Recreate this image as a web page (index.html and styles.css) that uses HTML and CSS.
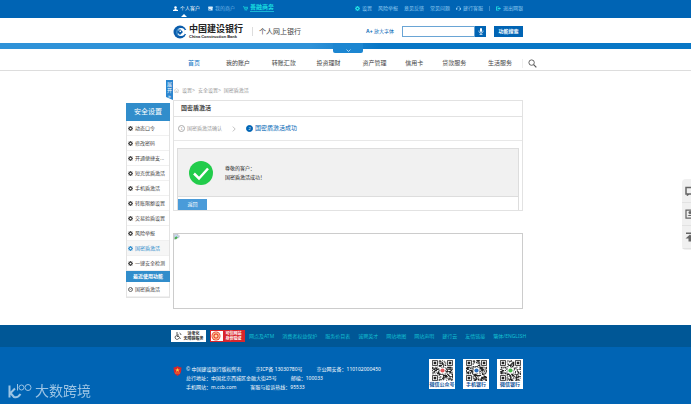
FILE: index.html
```
<!DOCTYPE html>
<html lang="zh-CN">

<head>
    <meta charset="UTF-8">
    <meta name="viewport" content="width=device-width, initial-scale=1.0">
    <title>中国建设银行 个人网上银行</title>
    <link rel="stylesheet" href="styles.css">
</head>

<body>

    <svg class="defs" width="0" height="0">
        <symbol id="gear" viewBox="0 0 10 10">
            <circle cx="5" cy="5" r="3" fill="none" stroke="currentColor" stroke-width="2.6" />
            <path d="M5 0v2M5 8v2M0 5h2M8 5h2M1.5 1.5l1.4 1.4M7.1 7.1l1.4 1.4M8.5 1.5L7.1 2.9M2.9 7.1L1.5 8.5" stroke="currentColor" stroke-width="1.5" />
        </symbol>
    </svg>

    <div class="topbar">
        <nav class="top-left">
            <a href="#" class="current">
                <svg class="icon" viewBox="0 0 12 12" fill="currentColor"><circle cx="6" cy="3.5" r="3" /><path d="M4.5 6h3v2L12 9.5V12H0V9.5L4.5 8z" /></svg>个人客户
            </a>
            <a href="#" class="merchant">
                <svg class="icon" viewBox="0 0 12 12"><path fill="#d9ecfa" d="M1 1h10l1 4H0zM1 5h10v6H1z" /><path fill="#0064b4" d="M3 7h3v2H3z" /></svg>我的商户
            </a>
            <a href="#" class="mall">
                <svg class="icon" viewBox="0 0 12 12"><path d="M0 1h2l2 7h6l2-5H3M5 5h5" fill="none" stroke="currentColor" stroke-width="1.6" /><circle cx="5" cy="11" r="1" fill="currentColor" /><circle cx="9" cy="11" r="1" fill="currentColor" /></svg><span>善融商务</span>
            </a>
        </nav>
        <nav class="top-right">
            <a href="#"><svg class="icon bright"><use href="#gear" /></svg>设置</a>
            <a href="#">风险举报</a>
            <a href="#">意见反馈</a>
            <a href="#">常见问题</a>
            <a href="#"><svg class="icon" viewBox="0 0 12 12"><path d="M2 8V5a4 4 0 0 1 8 0v3q0 3-4 3" fill="none" stroke="currentColor" stroke-width="1.3" /><path d="M0 5h3v4H0zM9 5h3v4H9z" fill="currentColor" /></svg>建行客服</a>
            <span class="bar"></span>
            <a href="#"><svg class="icon bright" viewBox="0 0 12 12"><path d="M0 1h7v2H2v6h5v2H0z" fill="currentColor" /><path d="M4 5h4V3l4 3-4 3V7H4z" fill="currentColor" /></svg>退出网银</a>
        </nav>
    </div>

    <header class="header">
        <a href="#" class="logo">
            <svg class="logo-mark" viewBox="0 0 28 28">
                <circle cx="14" cy="14" r="13" fill="#0a5cab" />
                <circle cx="16" cy="14" r="8" fill="#fff" />
                <path d="M13 5q-7 3-7 10 1 5 5 7-2-10 2-17z" fill="#3b8ccc" />
                <path d="M14 8l6 6-6 6-6-6z" fill="#0a5cab" />
                <path d="M13 11h3v3h-3z" fill="#fff" />
                <path d="M23 10h5v8h-5z" fill="#fff" />
            </svg>
            <span class="logo-text">
                <strong>中国建设银行</strong>
                <small>China Construction Bank</small>
            </span>
        </a>
        <h1>个人网上银行</h1>
        <form class="search">
            <a href="#" class="zoom-font"><b>A+</b> 放大字体</a>
            <div class="search-box">
                <input type="text" aria-label="功能搜索">
                <button type="button" class="mic" aria-label="语音">
                    <svg viewBox="0 0 10 14"><rect x="3" y="0" width="4" height="8" rx="2" fill="#fff" /><path d="M1 5v2q0 3 4 3t4-3V5M5 10v3M2 13h6" fill="none" stroke="#fff" stroke-width="1.3" /></svg>
                </button>
            </div>
            <button type="button" class="search-btn">功能搜索</button>
        </form>
    </header>

    <div class="band">
        <button type="button" class="pull" aria-label="展开">
            <svg viewBox="0 0 10 6"><path d="M1 1l4 4 4-4" fill="none" stroke="#d5eafa" stroke-width="1.5" /></svg>
        </button>
    </div>

    <nav class="main-nav">
        <a href="#" class="active">首页</a>
        <a href="#">我的账户</a>
        <a href="#">转账汇款</a>
        <a href="#">投资理财</a>
        <a href="#">资产管理</a>
        <a href="#">信用卡</a>
        <a href="#">贷款服务</a>
        <a href="#">生活服务</a>
        <a href="#" class="find" aria-label="搜索">
            <svg viewBox="0 0 20 20"><circle cx="8" cy="8" r="6" fill="none" stroke="#555" stroke-width="2" /><path d="M12.500 12.500l6 6" stroke="#555" stroke-width="2.600" /></svg>
        </a>
    </nav>

    <div class="container">
        <aside class="sidebar">
            <h2>安全设置</h2>
            <ul>
                <li><a href="#"><svg class="dot"><use href="#gear" /></svg>动态口令</a></li>
                <li><a href="#"><svg class="dot"><use href="#gear" /></svg>修改密码</a></li>
                <li><a href="#"><svg class="dot"><use href="#gear" /></svg>开通便捷支...</a></li>
                <li><a href="#"><svg class="dot"><use href="#gear" /></svg>短克优盾激活</a></li>
                <li><a href="#"><svg class="dot"><use href="#gear" /></svg>手机盾激活</a></li>
                <li><a href="#"><svg class="dot"><use href="#gear" /></svg>转账限额设置</a></li>
                <li><a href="#"><svg class="dot"><use href="#gear" /></svg>交易验盾设置</a></li>
                <li><a href="#"><svg class="dot"><use href="#gear" /></svg>风险举报</a></li>
                <li class="selected"><a href="#"><svg class="dot"><use href="#gear" /></svg>国密盾激活</a></li>
                <li><a href="#"><svg class="dot"><use href="#gear" /></svg>一键安全检测</a></li>
            </ul>
            <h3>最近使用功能</h3>
            <ul>
                <li><a href="#"><svg class="dot" viewBox="0 0 10 10"><circle cx="5" cy="5" r="4" fill="none" stroke="currentColor" stroke-width="1.6" /><path d="M3 4l2 2 3-4" fill="none" stroke="currentColor" /></svg>国密盾激活</a></li>
            </ul>
        </aside>

        <main class="content">
            <button type="button" class="ribbon"><span>展</span><span>开</span><span>»</span></button>
            <div class="crumbs">
                <svg viewBox="0 0 12 12"><path d="M0 6l6-5 6 5M2 5v6h3V7h2v4h3V5" fill="none" stroke="#aaa" /></svg>
                <a href="#">设置&gt;</a>
                <a href="#">安全设置&gt;</a>
                <a href="#">国密盾激活</a>
            </div>

            <section class="panel">
                <h2>国密盾激活</h2>
                <ol class="steps">
                    <li><span class="num">1</span>国密盾激活确认</li>
                    <li class="arrow"><svg viewBox="0 0 6 10"><path d="M1 1l4 4-4 4" fill="none" stroke="#999" /></svg></li>
                    <li class="on"><span class="num">2</span>国密盾激活成功</li>
                </ol>
                <div class="result">
                    <div class="message">
                        <svg class="ok" viewBox="0 0 24 24"><circle cx="12" cy="12" r="12" fill="#22cc4b" /><path d="M5 12.500l5 5 9-10" fill="none" stroke="#fff" stroke-width="2.500" /></svg>
                        <p>尊敬的客户：<br>国密盾激活成功！</p>
                    </div>
                    <button type="button" class="back">返回</button>
                </div>
            </section>

            <div class="banner">
                <svg viewBox="0 0 16 16"><path d="M1 1h9l4 4v3l-3 3-3-1-4 4H1z" fill="#c3d9f5" stroke="#999" /><path d="M2 13V9l4-3 4 3-4 5z" fill="#4caf50" /><path d="M10 1v4h4" fill="#fff" stroke="#999" /></svg>
            </div>
        </main>
    </div>

    <footer>
        <div class="foot-links">
            <a href="#" class="badge access">
                <svg viewBox="0 0 16 16"><circle cx="6" cy="2" r="1.500" fill="#333" /><path d="M6 4v5h4l3 5M6 6h4M5 7a4 4 0 1 0 5 5M11 2q3 1 3 4" fill="none" stroke="#333" stroke-width="1.500" /></svg>
                <span>适老化<br>无障碍服务</span>
            </a>
            <a href="#" class="badge trust">
                <svg viewBox="0 0 20 20"><circle cx="10" cy="10" r="9" fill="#e8432e" /><circle cx="10" cy="10" r="6.500" fill="none" stroke="#ffd9a8" stroke-width="2" /><circle cx="10" cy="10" r="3" fill="#ffd9a8" /></svg>
                <span>可信网站<br>身份验证</span>
            </a>
            <a href="#">网点及ATM</a>
            <a href="#">消费者权益保护</a>
            <a href="#">服务价目表</a>
            <a href="#">诚聘英才</a>
            <a href="#">网站地图</a>
            <a href="#">网站声明</a>
            <a href="#">建行云</a>
            <a href="#">友情链接</a>
            <a href="#">繁体/ENGLISH</a>
        </div>
        <div class="foot-info">
            <svg class="police" viewBox="0 0 18 20"><path d="M9 0l3 2 5 1-1 9q-1 5-7 8-6-3-7-8L1 3l5-1z" fill="#d8262c" /><path d="M9 4l1.500 3h3L11 9l1 3-3-2-3 2 1-3-2.500-2h3z" fill="#ffc93c" /><path d="M4 14h10" stroke="#ffc93c" /></svg>
            <div class="copy">
                <p><span>© 中国建设银行版权所有</span><span>京ICP备 13030780号</span><span>京公网安备：110102000450</span></p>
                <p><span>总行地址：中国北京西城区金融大街25号</span><span>邮编：100033</span></p>
                <p><span>手机网站：m.ccb.com</span><span>客服与投诉热线：95533</span></p>
            </div>
            <div class="codes">
                <figure><svg class="qr" viewBox="0 0 25 25" data-seed="7" data-color="#e0575b"></svg><figcaption>微信公众号</figcaption></figure>
                <figure><svg class="qr" viewBox="0 0 25 25" data-seed="19" data-color="#2a6fc0"></svg><figcaption>手机银行</figcaption></figure>
                <figure><svg class="qr" viewBox="0 0 25 25" data-seed="31" data-color="#45b649"></svg><figcaption>微信银行</figcaption></figure>
            </div>
        </div>
    </footer>

    <div class="float-tools">
        <button type="button" aria-label="消息"><svg viewBox="0 0 20 20"><path d="M2 3h16v13H8l-3 2v-2H2z" fill="none" stroke="#666" stroke-width="3" /></svg></button>
        <button type="button" aria-label="客服"><svg viewBox="0 0 20 20"><path d="M2 2h16v16H2z" fill="none" stroke="#666" stroke-width="2.500" /><circle cx="10" cy="7" r="3" fill="#666" /><path d="M5 14q5-5 10 0z" fill="#666" /></svg></button>
        <button type="button" aria-label="返回顶部"><svg viewBox="0 0 20 20"><path d="M2 1h16v3H2zM10 5l9 8h-5v6H7v-6H1z" fill="#666" /></svg></button>
    </div>

    <div class="mark">
        <svg viewBox="0 0 48 32"><path d="M3 5v24M14 11L5 20l7 8q8 2 13-6" fill="none" stroke="currentColor" stroke-width="4" /><path d="M19 2v13" stroke="currentColor" stroke-width="2" /><circle cx="27" cy="9" r="5" fill="none" stroke="currentColor" stroke-width="2" /><circle cx="40" cy="9" r="6" fill="none" stroke="currentColor" stroke-width="2" /></svg>
        <span>大数跨境</span>
    </div>

    <script>
        // fill each code with modules, three finder squares and a centre logo
        document.querySelectorAll(".qr").forEach(function (svg) {
            var seed = Number(svg.dataset.seed);
            var d = "";
            for (var y = 0; y < 25; y++) {
                for (var x = 0; x < 25; x++) {
                    seed = (seed * 1103515245 + 12345) % 2147483648;
                    var corner = (x < 8 && y < 8) || (x > 16 && y < 8) || (x < 8 && y > 16);
                    if (!corner && seed / 2147483648 > 0.45) {
                        d += "M" + x + " " + y + "h1v1h-1z";
                    }
                }
            }
            var html = '<path fill="#222" d="' + d + '"/>';
            [[0, 0], [18, 0], [0, 18]].forEach(function (p) {
                html += '<path fill="none" stroke="#222" d="M' + (p[0] + 0.5) + " " + (p[1] + 0.5) + 'h6v6h-6z"/>';
                html += '<rect fill="#222" width="3" height="3" x="' + (p[0] + 2) + '" y="' + (p[1] + 2) + '"/>';
            });
            html += '<rect x="9" y="9" width="7" height="7" fill="#fff"/><circle cx="12.5" cy="12.5" r="2.5" fill="' + svg.dataset.color + '"/>';
            svg.innerHTML = html;
        });
    </script>

</body>

</html>
```
FILE: styles.css
```
* {
    box-sizing: border-box;
}

body {
    margin: 0;
    font-family: "Liberation Sans", "Noto Sans CJK SC", sans-serif;
    font-size: 5px;
    line-height: 9px;
    color: #444;
    background-color: #fff;
}

a {
    color: inherit;
    text-decoration: none;
}

h1, h2, h3, p, ul, ol, figure {
    margin: 0;
    padding: 0;
    font-weight: normal;
}

ul, ol {
    list-style: none;
}

button, input {
    font: inherit;
    margin: 0;
    padding: 0;
    border: 0;
    border-radius: 0;
}

svg {
    display: block;
    flex: none;
}

.defs {
    position: absolute;
}

.topbar, .header, .main-nav {
    display: flex;
    align-items: center;
    padding: 0 168px 0 173px;
}

/* top bar */
.topbar {
    justify-content: space-between;
    height: 18px;
    padding-bottom: 2px;
    background-color: #0064b4;
    color: #8cc8f0;
}

.top-left, .top-right {
    display: flex;
    align-items: center;
    gap: 6px;
    white-space: nowrap;
}

.top-left {
    gap: 8px;
}

.top-left a, .top-right a {
    display: flex;
    align-items: center;
    gap: 2px;
}

.icon {
    width: 5px;
    height: 5px;
}

.bright {
    color: #1fe0e6;
}

.top-left .current {
    position: relative;
    color: #fff;
}

.current::after {
    content: "";
    position: absolute;
    left: 8px;
    top: 100%;
    margin-top: 1px;
    border: 3px solid transparent;
    border-top: 0;
    border-bottom-color: #fff;
}

.top-left .merchant {
    color: #6fb2e4;
}

.top-left .mall {
    color: #19dfe0;
    font-size: 6px;
    font-weight: bold;
}

.mall span {
    border-bottom: 1px solid #19b5d5;
    line-height: 7px;
}

.bar {
    width: 1px;
    height: 5px;
    background-color: #3a8bcb;
}

/* logo and search */
.header {
    height: 25px;
    padding-top: 2px;
}

.logo {
    display: flex;
    align-items: center;
    gap: 2px;
}

.logo-mark {
    width: 14px;
    height: 14px;
}

.logo-text {
    display: flex;
    flex-direction: column;
    white-space: nowrap;
    color: #222;
}

.logo-text strong {
    font-size: 9px;
    line-height: 10px;
}

.logo-text small {
    font-size: 4px;
    line-height: 5px;
    font-weight: bold;
}

.header h1 {
    margin-left: 9px;
    padding-left: 6px;
    border-left: 1px solid #ddd;
    font-size: 7px;
    white-space: nowrap;
}

.search {
    display: flex;
    align-items: center;
    gap: 8px;
    margin-left: auto;
    height: 11px;
}

.zoom-font {
    color: #0064b4;
    white-space: nowrap;
}

.search-box {
    display: flex;
    width: 84px;
    height: 11px;
}

.search-box input {
    flex: 1;
    min-width: 0;
    border: 1px solid #6aa5d5;
    background-color: #fff;
}

.mic {
    display: grid;
    place-items: center;
    width: 11px;
    background-color: #0064b4;
}

.mic svg {
    width: 6px;
    height: 7px;
}

.search-btn {
    width: 29px;
    height: 11px;
    background-color: #0064b4;
    color: #fff;
    font-weight: bold;
}

.band {
    display: flex;
    justify-content: center;
    height: 6px;
    padding-left: 5px;
    background: linear-gradient(to right, #2f92d8, #2f92d8 45%, #0877c6 55%, #0877c6);
}

.pull {
    display: grid;
    place-items: end center;
    width: 30px;
    height: 10px;
    padding-bottom: 1px;
    background-color: #1c86d1;
    border-radius: 0 0 2px 2px;
}

.pull svg {
    width: 5px;
    height: 3px;
}

/* main menu */
.main-nav {
    display: grid;
    grid-template-columns: 38fr 46fr 45fr 46fr 43fr 37fr 46fr 34fr 14fr;
    height: 22px;
    padding: 7px 154px 0 188px;
    border-bottom: 1px solid #ddd;
    font-size: 6px;
    white-space: nowrap;
}

.main-nav .active {
    color: #0c74c4;
}

.find {
    padding-left: 5px;
    border-left: 1px solid #eee;
}

.find svg {
    width: 9px;
    height: 9px;
}

/* page body */
.container {
    display: grid;
    grid-template-columns: 44px 1fr;
    gap: 3px;
    padding: 9px 168px 16px 126px;
}

.sidebar {
    margin-top: 23px;
    align-self: start;
    border: 1px solid #e3e3e3;
    border-top: 0;
}

.sidebar h2, .sidebar h3 {
    margin: 0 -1px;
    background-color: #318dcb;
    color: #fff;
    text-align: center;
}

.sidebar h2 {
    font-size: 7px;
    line-height: 18px;
}

.sidebar h3 {
    font-size: 5px;
    font-weight: bold;
    line-height: 11px;
}

.sidebar li {
    height: 15px;
    border-bottom: 1px solid #f0f0f0;
}

.sidebar a {
    display: flex;
    align-items: center;
    gap: 2px;
    height: 14px;
    padding-left: 1px;
    white-space: nowrap;
}

.dot {
    width: 5px;
    height: 5px;
}

.sidebar .selected {
    background-color: #f6f6f6;
    color: #318dcb;
}

.content {
    position: relative;
    min-width: 0;
}

.ribbon {
    position: absolute;
    left: -7px;
    top: 0;
    display: flex;
    flex-direction: column;
    align-items: center;
    width: 7px;
    height: 20px;
    padding-top: 1px;
    background-color: #2b86d0;
    clip-path: polygon(0 0, 100% 0, 100% 100%, 0 85%);
    color: #fff;
    font-size: 5px;
    line-height: 6px;
}

.crumbs {
    display: flex;
    align-items: center;
    gap: 3px;
    height: 20px;
    padding-left: 1px;
    color: #999;
}

.crumbs svg {
    width: 5px;
    height: 5px;
}

.panel {
    border: 1px solid #e2e2e2;
}

.panel h2 {
    padding-left: 7px;
    border-bottom: 1px solid #e2e2e2;
    font-size: 6px;
    font-weight: bold;
    line-height: 15px;
}

.steps {
    display: flex;
    align-items: center;
    height: 24px;
    padding-left: 4px;
    border-bottom: 1px solid #e8e8e8;
    color: #999;
}

.steps li {
    display: flex;
    align-items: center;
    gap: 2px;
}

.steps .arrow {
    margin: 0 10px;
}

.arrow svg {
    width: 4px;
    height: 6px;
}

.num {
    width: 7px;
    height: 7px;
    border: 1px solid #aaa;
    border-radius: 50%;
    font-size: 4px;
    line-height: 5px;
    text-align: center;
}

.steps .on {
    color: #0064b4;
    font-size: 6px;
}

.on .num {
    border-color: #0064b4;
    background-color: #0064b4;
    color: #fff;
}

.result {
    margin: 7px 3px 0;
    border: 1px solid #ddd;
    border-bottom: 0;
}

.message {
    display: flex;
    align-items: center;
    gap: 12px;
    height: 48px;
    padding-left: 11px;
    border-bottom: 1px solid #ddd;
    background-color: #f1f1f1;
    color: #222;
    font-weight: bold;
}

.ok {
    width: 24px;
    height: 24px;
}

.back {
    display: block;
    width: 29px;
    height: 11px;
    margin-top: 2px;
    background-color: #4a9bd9;
    color: #fff;
}

.banner {
    height: 76px;
    margin-top: 22px;
    border: 1px solid #ccc;
}

.banner svg {
    width: 6px;
    height: 6px;
}

/* footer */
footer {
    background-color: #0064b4;
    color: #fff;
    font-family: "Noto Sans", "Noto Sans CJK SC", sans-serif;
}

.foot-links {
    display: flex;
    align-items: center;
    gap: 8px;
    height: 22px;
    padding: 0 160px 0 171px;
    background-color: #005796;
    color: #13bfd0;
    white-space: nowrap;
}

.badge {
    display: flex;
    align-items: center;
    justify-content: center;
    gap: 2px;
    flex: none;
    width: 35px;
    height: 12px;
    margin-right: -4px;
    background-color: #fff;
    color: #333;
    font-size: 4px;
    font-weight: bold;
    line-height: 5px;
    text-align: center;
}

.access svg {
    width: 8px;
    height: 8px;
}

.trust {
    border: 1px solid #d8262c;
}

.trust svg {
    width: 10px;
    height: 10px;
}

.trust span {
    flex: 1;
    background-color: #d8262c;
    color: #fff;
}

.foot-info {
    display: flex;
    align-items: flex-start;
    height: 57px;
    padding: 12px 168px 0 173px;
}

.police {
    width: 9px;
    height: 10px;
    margin-top: 7px;
}

.copy {
    flex: 1;
    padding: 6px 0 0 4px;
    white-space: nowrap;
}

.copy p {
    display: flex;
    gap: 14px;
}

.codes {
    display: flex;
    gap: 8px;
}

.codes figure {
    display: flex;
    flex-direction: column;
    align-items: center;
    width: 26px;
    height: 30px;
    padding-top: 1px;
    background-color: #fff;
    color: #0a4f98;
}

.codes figcaption {
    font-weight: bold;
    line-height: 7px;
    white-space: nowrap;
}

.qr {
    width: 21px;
    height: 21px;
}

/* floating tools and mark */
.float-tools {
    position: fixed;
    right: 0;
    top: 179px;
    width: 9px;
    padding: 1px 0;
    overflow: hidden;
    border-radius: 4px 0 0 4px;
    background-color: #f0f0f0;
}

.float-tools button {
    display: flex;
    align-items: center;
    width: 16px;
    height: 23px;
    padding-left: 3px;
    border-bottom: 1px solid #e2e2e2;
    background: none;
}

.float-tools svg {
    width: 10px;
    height: 10px;
}

.mark {
    position: fixed;
    left: 8px;
    bottom: 5px;
    display: flex;
    align-items: center;
    gap: 3px;
    color: #9cc4e4;
    font-size: 14px;
    line-height: 18px;
}

.mark svg {
    width: 24px;
    height: 16px;
}
```
